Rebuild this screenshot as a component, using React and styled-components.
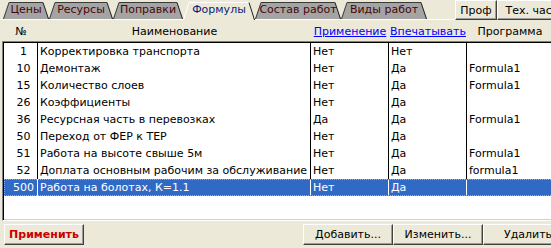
import React from 'react';
import styled, { createGlobalStyle } from 'styled-components';

const GlobalStyle = createGlobalStyle`
    html, body {
        margin: 0;
        padding: 0;
        background: #ece9d8;
        overflow: hidden;
    }
    body {
        font-family: "DejaVu Sans", "Liberation Sans", sans-serif;
        font-size: 11px;
        color: #000;
    }
`;

const tabs = [
    { label: 'Цены', width: 46 },
    { label: 'Ресурсы', width: 64 },
    { label: 'Поправки', width: 70 },
    { label: 'Формулы', width: 72, active: true },
    { label: 'Состав работ', width: 86 },
    { label: 'Виды работ', width: 86 },
];

const rows = [
    { n: 1, name: 'Корректировка транспорта', use: 'Нет', print: 'Нет', prog: '' },
    { n: 10, name: 'Демонтаж', use: 'Нет', print: 'Да', prog: 'Formula1' },
    { n: 15, name: 'Количество слоев', use: 'Нет', print: 'Да', prog: 'Formula1' },
    { n: 26, name: 'Коэффициенты', use: 'Нет', print: 'Да', prog: '' },
    { n: 36, name: 'Ресурсная часть в перевозках', use: 'Да', print: 'Да', prog: 'Formula1' },
    { n: 50, name: 'Переход от ФЕР к ТЕР', use: 'Нет', print: 'Да', prog: '' },
    { n: 51, name: 'Работа на высоте свыше 5м', use: 'Нет', print: 'Да', prog: 'Formula1' },
    { n: 52, name: 'Доплата основным рабочим за обслуживание машин', use: 'Нет', print: 'Да', prog: 'formula1' },
    { n: 500, name: 'Работа на болотах, К=1.1', use: 'Нет', print: 'Да', prog: '', selected: true },
];

function Tab({ label, width, active }) {
    const h = active ? 18 : 17;
    return (
        <TabItem $w={width} $active={active}>
            <TabShape width={width} height={h} viewBox={`0 0 ${width} ${h}`}>
                <polygon
                    points={`0,${h} 6,0.5 ${width - 6},0.5 ${width},${h}`}
                    fill={active ? '#ece9d8' : '#a4a4a4'}
                />
                <polyline
                    points={`0.5,${h} 6,0.5 ${width - 6},0.5`}
                    fill="none"
                    stroke={active ? '#ffffff' : '#3a3a3a'}
                    strokeWidth="1"
                />
                <line
                    x1={width - 6} y1="0.5" x2={width - 0.5} y2={h}
                    stroke="#202020" strokeWidth="1"
                />
            </TabShape>
            <TabLabel $active={active}>{label}</TabLabel>
        </TabItem>
    );
}

function App() {
    return (
        <Window>
            <GlobalStyle />
            <Inner>
                <TabBar>
                    <TabStrip>
                        {tabs.map((t) => (
                            <Tab key={t.label} {...t} />
                        ))}
                    </TabStrip>
                    <ToolGroup>
                        <ToolButton $w={42}>Проф</ToolButton>
                        <ToolButton $w={76}>Тех. часть</ToolButton>
                    </ToolGroup>
                </TabBar>
                <Panel>
                    <HeaderRow>
                        <HeadCell>№</HeadCell>
                        <HeadCell>Наименование</HeadCell>
                        <HeadCell><HeadLink>Применение</HeadLink></HeadCell>
                        <HeadCell><HeadLink>Впечатывать</HeadLink></HeadCell>
                        <HeadCell>Программа</HeadCell>
                    </HeaderRow>
                    <GridBox>
                        {rows.map((r) => (
                            <Row key={r.n} $selected={r.selected}>
                                <NumCell $selected={r.selected}>{r.n}</NumCell>
                                <Cell $selected={r.selected}>{r.name}</Cell>
                                <Cell $selected={r.selected}>{r.use}</Cell>
                                <Cell $selected={r.selected}>{r.print}</Cell>
                                <Cell $last>{r.prog}</Cell>
                            </Row>
                        ))}
                    </GridBox>
                    <Footer>
                        <Button $w={80} $danger>Применить</Button>
                        <ButtonGroup>
                            <Button $w={90}>Добавить...</Button>
                            <Button $w={90}>Изменить...</Button>
                            <Button $w={90}>Удалить</Button>
                        </ButtonGroup>
                    </Footer>
                </Panel>
            </Inner>
        </Window>
    );
}

const Window = styled.div`
    width: 551px;
    height: 248px;
    overflow: hidden;
    background: #ece9d8;
`;

const Inner = styled.div`
    width: 573px;
    height: 248px;
    display: flex;
    flex-direction: column;
`;

const TabBar = styled.div`
    height: 20px;
    display: flex;
    justify-content: space-between;
    box-shadow: inset 0 -1px 0 #ffffff;
`;

const TabStrip = styled.div`
    display: flex;
    padding-left: 3px;
    padding-top: 2px;
`;

const TabItem = styled.div`
    position: relative;
    width: ${(p) => p.$w}px;
    height: ${(p) => (p.$active ? 18 : 17)}px;
    display: flex;
    justify-content: center;
    z-index: ${(p) => (p.$active ? 1 : 0)};
`;

const TabShape = styled.svg`
    position: absolute;
    left: 0;
    top: 0;
    display: block;
`;

const TabLabel = styled.span`
    position: relative;
    line-height: 16px;
    font-size: 11px;
    white-space: nowrap;
    color: ${(p) => (p.$active ? '#0a1f7a' : '#4a0606')};
`;

const ToolGroup = styled.div`
    display: flex;
`;

const ToolButton = styled.div`
    width: ${(p) => p.$w}px;
    height: 20px;
    box-sizing: border-box;
    border-top: 1px solid #ffffff;
    border-left: 1px solid #ffffff;
    border-right: 1px solid #404040;
    border-bottom: 1px solid #404040;
    box-shadow: inset -1px -1px 0 #9d9d9d;
    display: flex;
    align-items: center;
    justify-content: center;
    white-space: nowrap;
    overflow: hidden;
`;

const Panel = styled.div`
    flex: 1;
    display: flex;
    flex-direction: column;
`;

const columns = '34px 273px 78px 78px 86px';

const HeaderRow = styled.div`
    height: 21px;
    padding-left: 4px;
    display: grid;
    grid-template-columns: ${columns};
    align-items: center;
`;

const HeadCell = styled.div`
    text-align: center;
    white-space: nowrap;
    padding-top: 2px;
`;

const HeadLink = styled.span`
    color: #0000ff;
    text-decoration: underline;
`;

const GridBox = styled.div`
    margin-left: 2px;
    height: 180px;
    box-sizing: border-box;
    padding: 1px 0 0 1px;
    background: #ffffff;
    border-top: 1px solid #808080;
    border-left: 1px solid #808080;
    border-bottom: 1px solid #ffffff;
    box-shadow: inset 1px 1px 0 #000000, inset 0 -1px 0 #d4d0c8;
`;

const Row = styled.div`
    height: 17px;
    display: grid;
    grid-template-columns: ${columns} 1fr;
    background: ${(p) => (p.$selected ? '#316ac5' : 'transparent')};
    color: ${(p) => (p.$selected ? '#ffffff' : '#000000')};
    outline: ${(p) => (p.$selected ? '1px dotted #e4a040' : 'none')};
    outline-offset: -1px;
    line-height: 17px;
`;

const Cell = styled.div`
    padding-left: 2px;
    white-space: nowrap;
    overflow: hidden;
    border-right: ${(p) => (p.$last ? 'none' : `1px solid ${p.$selected ? '#ffffff' : '#000000'}`)};
`;

const NumCell = styled(Cell)`
    padding-left: 6px;
    text-align: center;
`;

const Footer = styled.div`
    display: flex;
    justify-content: space-between;
    padding: 3px 0 0 4px;
`;

const ButtonGroup = styled.div`
    display: flex;
`;

const Button = styled.div`
    width: ${(p) => p.$w}px;
    height: 21px;
    box-sizing: border-box;
    border-top: 1px solid #ffffff;
    border-left: 1px solid #ffffff;
    border-right: 1px solid #404040;
    border-bottom: 1px solid #404040;
    box-shadow: inset -1px -1px 0 #9d9d9d;
    display: flex;
    align-items: center;
    justify-content: center;
    white-space: nowrap;
    color: ${(p) => (p.$danger ? '#cc0000' : '#000000')};
    font-weight: ${(p) => (p.$danger ? 700 : 400)};
`;

export default App;
